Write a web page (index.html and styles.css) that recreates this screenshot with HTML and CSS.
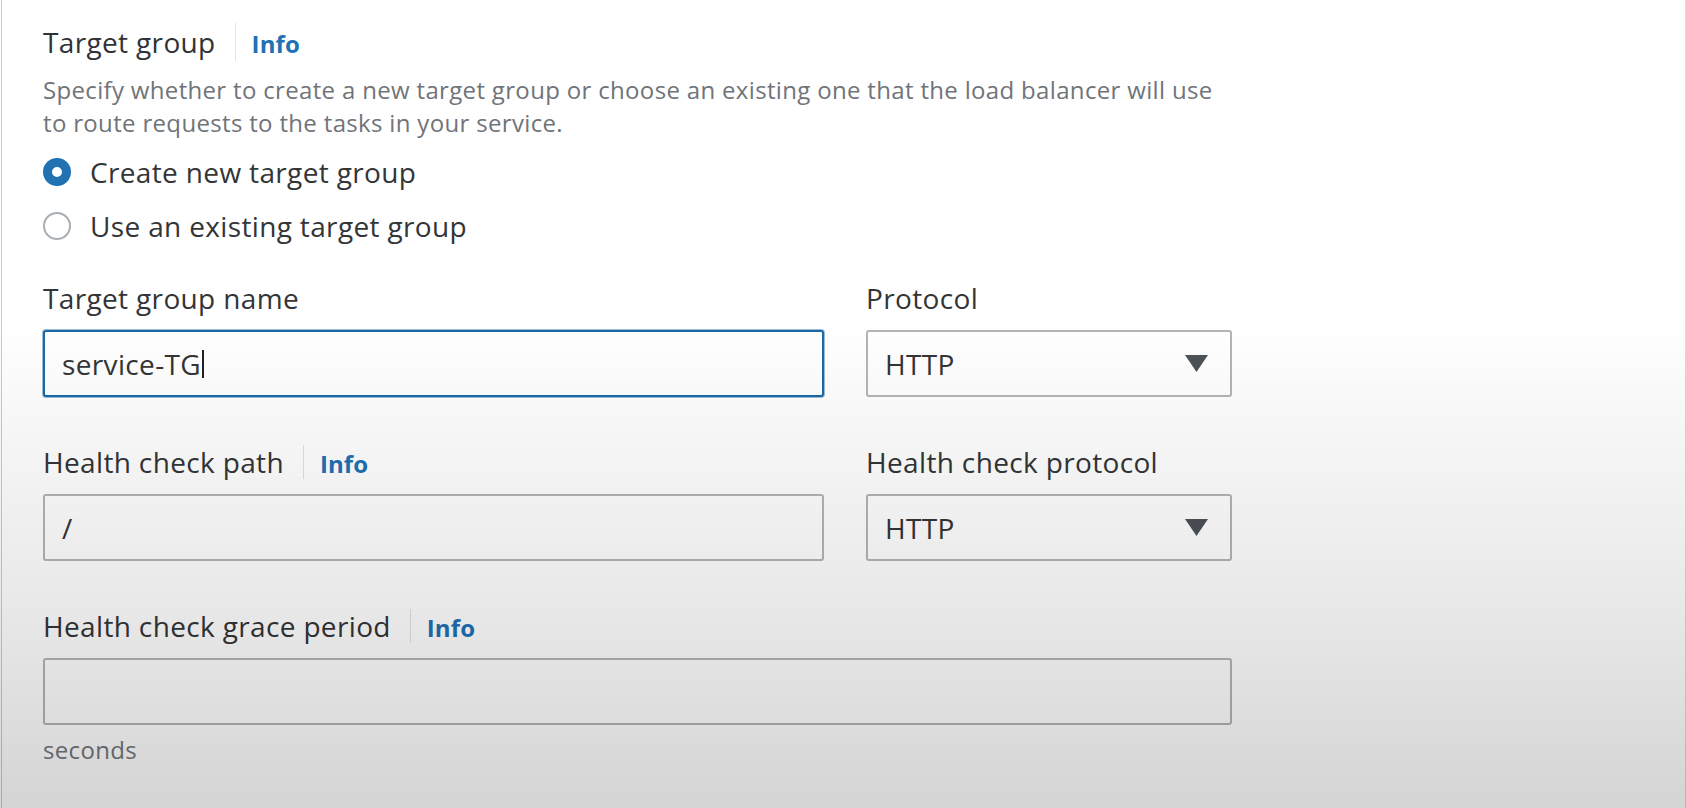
FILE: index.html
```html
<!DOCTYPE html>
<html lang="en">
<head>
<meta charset="utf-8">
<title>Target group</title>
<link rel="stylesheet" href="styles.css">
</head>
<body>
<main class="panel">
  <div class="heading">
    <span class="heading-title">Target group</span>
    <span class="sep"></span>
    <a class="info">Info</a>
  </div>
  <p class="desc">Specify whether to create a new target group or choose an existing one that the load balancer will use<br>to route requests to the tasks in your service.</p>
  <div class="radios">
    <div class="radio-row"><span class="radio checked"></span><span class="radio-label">Create new target group</span></div>
    <div class="radio-row"><span class="radio"></span><span class="radio-label">Use an existing target group</span></div>
  </div>
  <div class="grid">
    <div class="field">
      <div class="label"><span>Target group name</span></div>
      <div class="input focused"><span>service-TG</span><span class="caret"></span></div>
    </div>
    <div class="field">
      <div class="label"><span>Protocol</span></div>
      <div class="select"><span>HTTP</span><svg class="arrow" width="23" height="17" viewBox="0 0 23 17"><polygon points="0,0 23,0 11.5,17" fill="#4d5258"/></svg></div>
    </div>
    <div class="field">
      <div class="label"><span>Health check path</span><span class="sep"></span><a class="info">Info</a></div>
      <div class="input"><span>/</span></div>
    </div>
    <div class="field">
      <div class="label"><span>Health check protocol</span></div>
      <div class="select"><span>HTTP</span><svg class="arrow" width="23" height="17" viewBox="0 0 23 17"><polygon points="0,0 23,0 11.5,17" fill="#4d5258"/></svg></div>
    </div>
    <div class="field wide">
      <div class="label"><span>Health check grace period</span><span class="sep"></span><a class="info">Info</a></div>
      <div class="input"></div>
    </div>
  </div>
  <p class="hint">seconds</p>
</main>
</body>
</html>
```
FILE: styles.css
```css
html, body {
  margin: 0;
  padding: 0;
  background: #ffffff;
}

body {
  padding-left: 1px;
  font-family: "Open Sans", "Noto Sans", sans-serif;
  color: #333537;
  letter-spacing: 0.35px;
  overflow: hidden;
}

body::after {
  content: "";
  position: fixed;
  inset: 0;
  pointer-events: none;
  background: linear-gradient(to bottom,
    rgba(0,0,0,0) 0px,
    rgba(0,0,0,0) 320px,
    rgba(0,0,0,0.035) 430px,
    rgba(0,0,0,0.085) 600px,
    rgba(0,0,0,0.16) 790px,
    rgba(0,0,0,0.16) 808px);
}

.panel {
  box-sizing: border-box;
  min-height: 808px;
  border-left: 1px solid #cbcbcb;
  border-right: 1px solid #dadada;
  padding: 22px 0 0 41px;
}

.heading {
  display: flex;
  align-items: baseline;
  height: 40px;
  line-height: 40px;
}

.heading-title {
  font-size: 28px;
  color: #303336;
}

.sep {
  align-self: center;
  width: 1px;
  height: 38px;
  background: #e2e2e2;
  margin: 0 16px 0 19px;
}

.info {
  font-size: 24px;
  font-weight: 700;
  color: #1f71b5;
  letter-spacing: 0.1px;
}

.desc {
  margin: 11px 0 0 0;
  font-size: 24px;
  line-height: 33px;
  letter-spacing: 0.33px;
  color: #707479;
  white-space: nowrap;
}

.radios {
  margin-top: 6px;
  display: flex;
  flex-direction: column;
}

.radio-row {
  display: flex;
  align-items: center;
  height: 54px;
}

.radio {
  box-sizing: border-box;
  width: 28px;
  height: 28px;
  border-radius: 50%;
  border: 2px solid #a9aeb2;
  background: #fff;
  margin-right: 19px;
  flex: none;
}

.radio.checked {
  border: 9px solid #2172b3;
}

.radio-label {
  font-size: 28px;
  line-height: 54px;
  color: #333537;
}

.grid {
  margin-top: 25px;
  display: grid;
  grid-template-columns: 781px 366px;
  column-gap: 42px;
  row-gap: 45px;
  width: 1189px;
}

.field {
  display: flex;
  flex-direction: column;
}

.field.wide {
  grid-column: 1 / span 2;
}

.label {
  display: flex;
  align-items: baseline;
  height: 40px;
  line-height: 40px;
  font-size: 28px;
  color: #333537;
  margin-bottom: 12px;
}

.label .sep {
  height: 34px;
  margin: 0 16px 0 19px;
}

.input,
.select {
  box-sizing: border-box;
  height: 67px;
  border: 2px solid #b2b6b9;
  border-radius: 3px;
  padding: 0 17px;
  display: flex;
  align-items: center;
  font-size: 28px;
  color: #333537;
  background: #ffffff;
}

.input.focused {
  border-color: #1c6aa8;
  box-shadow: 0 0 0 1px rgba(30, 110, 175, 0.45);
}

.caret {
  display: inline-block;
  width: 2px;
  height: 28px;
  background: #222;
  margin-left: 1px;
}

.select {
  justify-content: space-between;
  padding-right: 22px;
}

.arrow {
  display: block;
  flex: none;
}

.hint {
  margin: 8px 0 0 0;
  font-size: 24px;
  line-height: 33px;
  color: #73777b;
}
```
